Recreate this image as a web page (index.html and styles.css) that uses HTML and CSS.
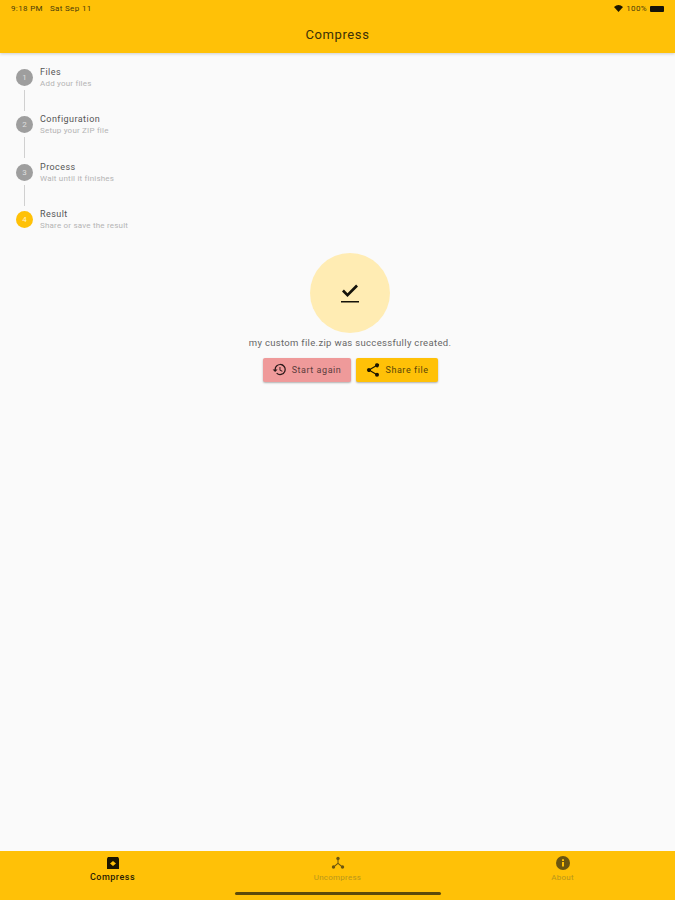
FILE: index.html
```html
<!DOCTYPE html>
<html lang="en">
  <head>
    <meta charset="UTF-8" />
    <meta name="viewport" content="width=device-width, initial-scale=1.0" />
    <title>Compress</title>
    <link rel="stylesheet" href="styles.css">
  </head>
  <body>
    <div class="app">
      <header class="topbar">
        <div class="status">
          <span class="status-left"><span>9:18 PM</span><span>Sat Sep 11</span></span>
          <span class="status-right">
            <svg width="9" height="7" viewBox="0 0 18 14"><path d="M9 14 0 4q9-8 18 0z" fill="#1c1600"/></svg>
            <span>100%</span>
            <span class="battery"></span>
          </span>
        </div>
        <h1 class="titel">Compress</h1>
      </header>

      <main class="content">
        <ol class="stepper">
          <li class="step">
            <span class="num">1</span>
            <div><h2>Files</h2><p>Add your files</p></div>
          </li>
          <li class="step">
            <span class="num">2</span>
            <div><h2>Configuration</h2><p>Setup your ZIP file</p></div>
          </li>
          <li class="step">
            <span class="num">3</span>
            <div><h2>Process</h2><p>Wait until it finishes</p></div>
          </li>
          <li class="step valgt">
            <span class="num">4</span>
            <div><h2>Result</h2><p>Share or save the result</p></div>
          </li>
        </ol>

        <section class="result">
          <div class="done">
            <svg width="24" height="24" viewBox="0 0 24 24"><path d="M3 20h18v1.500H3zM9.500 16 4 10.500l1.900-1.900 3.600 3.600 8.600-8.600 1.900 1.900z" fill="#15130a"/></svg>
          </div>
          <p class="message">my custom file.zip was successfully created.</p>
          <div class="buttons">
            <button class="btn btn-again">
              <svg width="15" height="15" viewBox="0 0 24 24"><path d="M13 3a9 9 0 0 0-9 9H1l4 4 4-4H6a7 7 0 1 1 2.100 5l-1.400 1.400A9 9 0 1 0 13 3zm-1 5v5l4.200 2.500.8-1.300-3.500-2V8z" fill="#2b1a1a"/></svg>
              Start again
            </button>
            <button class="btn btn-share">
              <svg width="16" height="16" viewBox="0 0 24 24"><path d="M18 16a3 3 0 0 0-2 .8L8.900 12.700a3 3 0 0 0 0-1.400L16 7.200A3 3 0 1 0 15 5l.1.700L8 9.800a3 3 0 1 0 0 4.400l7.100 4.100L15 19a3 3 0 1 0 3-3z" fill="#1c1600"/></svg>
              Share file
            </button>
          </div>
        </section>
      </main>

      <nav class="tabs">
        <div class="tab aktiv">
          <svg width="16" height="16" viewBox="0 0 16 16"><path d="M3 2h10l1 1.500V14H2V3.500z" fill="#1c1600"/><path d="M5 8.500 8 6l3 2.500L8 11z" fill="#ffc107"/></svg>
          <span>Compress</span>
        </div>
        <div class="tab">
          <svg width="16" height="16" viewBox="0 0 16 16"><circle cx="8" cy="3.500" r="1.700"/><circle cx="3.500" cy="12" r="1.700"/><circle cx="12.500" cy="12" r="1.700"/><path d="M7.500 5h1v3l3.500 3-.7.700L8 9l-3.300 2.700-.7-.7 3.500-3z"/></svg>
          <span>Uncompress</span>
        </div>
        <div class="tab">
          <svg width="16" height="16" viewBox="0 0 16 16"><circle cx="8" cy="8" r="7"/><path d="M7 7h2v4.500H7zM7 4.200h2v1.800H7z" fill="#ffc107"/></svg>
          <span>About</span>
        </div>
        <div class="homebar"></div>
      </nav>
    </div>
  </body>
</html>
```

FILE: styles.css
```css
* {
  box-sizing: border-box;
}

body {
  margin: 0;
  background-color: #fafafa;
  font-family: Roboto, "Liberation Sans", sans-serif;
  color: #2a2a2a;
}

.app {
  height: 900px;
  display: flex;
  flex-direction: column;
}

.topbar {
  height: 53px;
  padding: 5px 11px 0;
  background-color: #ffc107;
  box-shadow: 0 1px 3px rgba(0, 0, 0, 0.18);
}

.status {
  display: flex;
  justify-content: space-between;
  align-items: center;
  font-size: 8px;
  line-height: 7px;
  letter-spacing: 0.35px;
  color: #4a3b0a;
}

.status-left {
  display: flex;
  gap: 7px;
}

.status-right {
  display: flex;
  align-items: center;
  gap: 3px;
}

.battery {
  width: 14px;
  height: 6px;
  background-color: #15130a;
  border-radius: 1px;
}

.titel {
  margin: 15px 0 0;
  text-align: center;
  font-size: 13px;
  font-weight: 400;
  line-height: 15px;
  letter-spacing: 0.6px;
  color: #3a3008;
}

.content {
  flex: 1;
  padding-top: 14px;
}

.stepper {
  margin: 0;
  padding: 0 0 0 16px;
  list-style: none;
}

.step {
  height: 47.4px;
  display: flex;
  gap: 7px;
  position: relative;
}

.step:not(:last-child)::after {
  content: "";
  position: absolute;
  left: 8px;
  top: 23px;
  width: 1px;
  height: 21px;
  background-color: #d0d0d0;
}

.num {
  width: 17px;
  height: 17px;
  margin-top: 2px;
  flex: none;
  border-radius: 50%;
  background-color: #9e9e9e;
  color: #dedede;
  font-size: 8px;
  line-height: 17px;
  text-align: center;
}

.valgt .num {
  background-color: #ffc107;
  color: #fff3cf;
}

.step h2 {
  margin: 0;
  font-size: 9px;
  font-weight: 400;
  line-height: 11px;
  letter-spacing: 0.45px;
  color: #555;
}

.step p {
  margin: 1px 0 0;
  font-size: 8px;
  line-height: 10px;
  letter-spacing: 0.2px;
  color: #b4b4b4;
}

.result {
  margin-top: -4px;
  padding-left: 25px;
  display: flex;
  flex-direction: column;
  align-items: center;
}

.done {
  width: 80px;
  height: 80px;
  display: grid;
  place-items: center;
  border-radius: 50%;
  background-color: #ffecb3;
}

.message {
  margin: 4px 0 0;
  font-size: 9.5px;
  line-height: 12px;
  letter-spacing: 0.32px;
  color: #666;
}

.buttons {
  margin-top: 9px;
  display: flex;
  gap: 5px;
}

.btn {
  height: 24px;
  padding: 0;
  display: flex;
  align-items: center;
  justify-content: center;
  gap: 5px;
  border: 0;
  border-radius: 2px;
  font-family: inherit;
  font-size: 9px;
  letter-spacing: 0.55px;
  box-shadow: 0 1px 2px rgba(0, 0, 0, 0.3);
}

.btn-again {
  width: 88px;
  background-color: #ef9a9a;
  color: #5a3c3c;
}

.btn-share {
  width: 82px;
  background-color: #ffc107;
  color: #5a4608;
}

.tabs {
  height: 49px;
  display: grid;
  grid-template-columns: repeat(3, 1fr);
  position: relative;
  background-color: #ffc107;
}

.tab {
  padding-top: 4px;
  display: flex;
  flex-direction: column;
  align-items: center;
  gap: 2px;
  font-size: 8px;
  line-height: 10px;
  letter-spacing: 0.25px;
  color: #b8961c;
}

.tab svg {
  fill: #6b5510;
}

.aktiv {
  gap: 1px;
  font-size: 9px;
  font-weight: 500;
  letter-spacing: 0.5px;
  color: #2a2205;
}

.homebar {
  position: absolute;
  left: 235px;
  bottom: 5px;
  width: 206px;
  height: 3px;
  border-radius: 2px;
  background-color: #5c4a0a;
}
```
